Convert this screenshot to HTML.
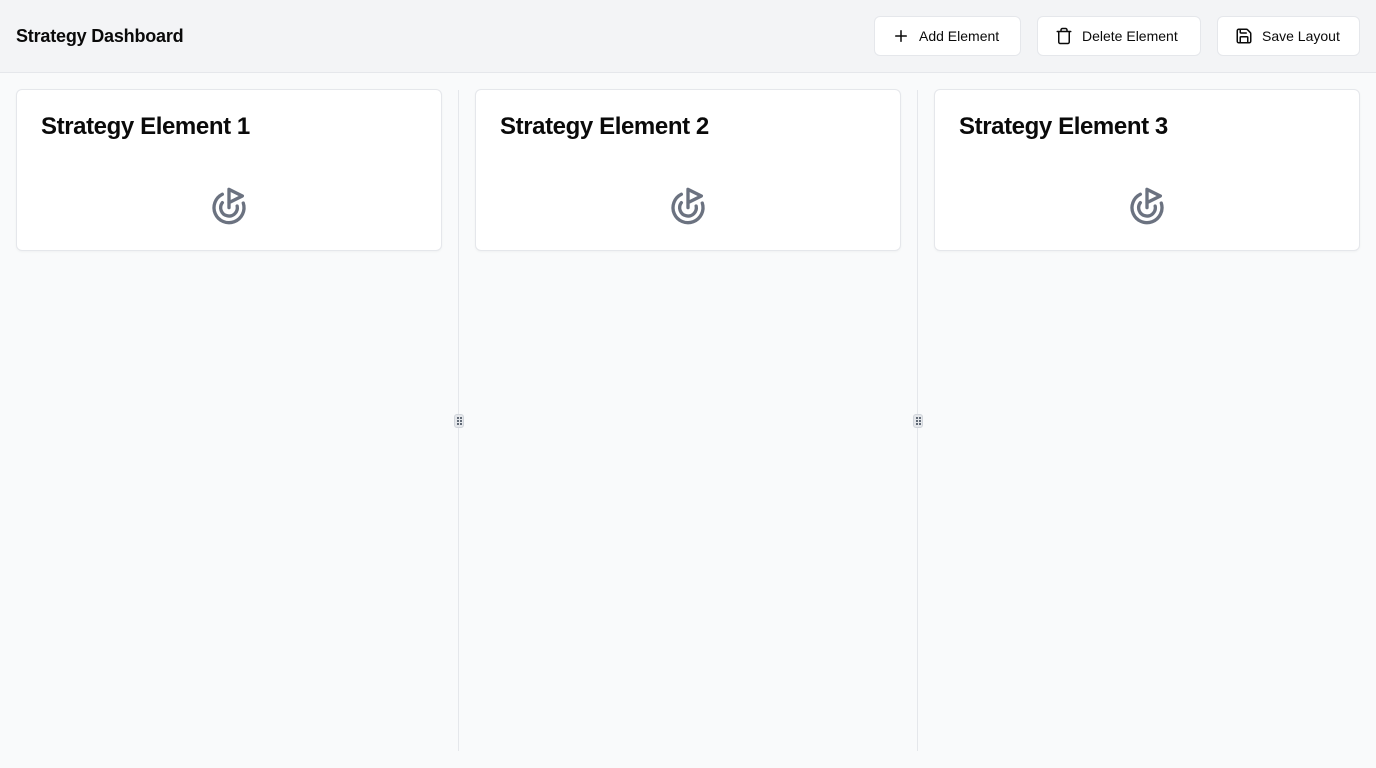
<!DOCTYPE html>
<html><head><style>
*{box-sizing:border-box;margin:0;padding:0}
body{width:1376px;height:768px;background:#f9fafb;font-family:"Liberation Sans",sans-serif;position:relative;overflow:hidden;color:#0a0a0a}
.hdr{position:absolute;left:0;top:0;width:1376px;height:73px;background:#f3f4f6;border-bottom:1px solid #e5e7eb}
.hdr h1{position:absolute;left:16px;top:26px;font-size:18px;font-weight:700;letter-spacing:-0.2px}
.btn{position:absolute;top:16px;height:40px;background:#fff;border:1px solid #e5e7eb;border-radius:6px;font-size:14px;display:flex;align-items:center;padding-left:17px;gap:9px;color:#0a0a0a}
.btn svg{width:18px;height:18px}
.card{position:absolute;top:89px;width:426px;height:162px;background:#fff;border:1px solid #e5e7eb;border-radius:6px;box-shadow:0 1px 2px rgba(0,0,0,.04)}
.card h2{position:absolute;left:24px;top:23px;font-size:24px;font-weight:700;letter-spacing:-0.4px}
.card svg{position:absolute;left:192px;top:96px;width:40px;height:40px}
.div{position:absolute;top:90px;width:1px;height:661px;background:#e5e7eb}
.hd{position:absolute;top:414px;width:10px;height:14px;background:#e5e7eb;border-radius:3px;border:1px solid #d1d5db}
.hd span{position:absolute;width:2px;height:2px;background:#374151;border-radius:1px}
</style></head><body>
<div class="hdr"><h1>Strategy Dashboard</h1>
<div class="btn" style="left:874px;width:147px"><svg viewBox="0 0 24 24" fill="none" stroke="#0a0a0a" stroke-width="2" stroke-linecap="round"><path d="M5 12h14M12 5v14"/></svg>Add Element</div>
<div class="btn" style="left:1037px;width:164px"><svg viewBox="0 0 24 24" fill="none" stroke="#0a0a0a" stroke-width="2" stroke-linecap="round" stroke-linejoin="round"><path d="M3 6h18M19 6v14a2 2 0 0 1-2 2H7a2 2 0 0 1-2-2V6M8 6V4a2 2 0 0 1 2-2h4a2 2 0 0 1 2 2v2"/></svg>Delete Element</div>
<div class="btn" style="left:1217px;width:143px"><svg viewBox="0 0 24 24" fill="none" stroke="#0a0a0a" stroke-width="2" stroke-linecap="round" stroke-linejoin="round"><path d="M15.2 3a2 2 0 0 1 1.4.6l3.8 3.8a2 2 0 0 1 .6 1.4V19a2 2 0 0 1-2 2H5a2 2 0 0 1-2-2V5a2 2 0 0 1 2-2z"/><path d="M17 21v-7a1 1 0 0 0-1-1H8a1 1 0 0 0-1 1v7"/><path d="M7 3v4a1 1 0 0 0 1 1h7"/></svg>Save Layout</div>
</div>
<div class="card" style="left:16px"><h2>Strategy Element 1</h2><svg viewBox="0 0 24 24" fill="none" stroke="#6b7280" stroke-width="2" stroke-linecap="round" stroke-linejoin="round"><path d="M12 13V2l8 4-8 4"/><path d="M20.561 10.222a9 9 0 1 1-12.55-5.29"/><path d="M8.002 9.997a5 5 0 1 0 8.9 2.02"/></svg></div>
<div class="card" style="left:475px"><h2>Strategy Element 2</h2><svg viewBox="0 0 24 24" fill="none" stroke="#6b7280" stroke-width="2" stroke-linecap="round" stroke-linejoin="round"><path d="M12 13V2l8 4-8 4"/><path d="M20.561 10.222a9 9 0 1 1-12.55-5.29"/><path d="M8.002 9.997a5 5 0 1 0 8.9 2.02"/></svg></div>
<div class="card" style="left:934px"><h2>Strategy Element 3</h2><svg viewBox="0 0 24 24" fill="none" stroke="#6b7280" stroke-width="2" stroke-linecap="round" stroke-linejoin="round"><path d="M12 13V2l8 4-8 4"/><path d="M20.561 10.222a9 9 0 1 1-12.55-5.29"/><path d="M8.002 9.997a5 5 0 1 0 8.9 2.02"/></svg></div>
<div class="div" style="left:458px"></div>
<div class="div" style="left:917px"></div>
<div class="hd" style="left:454px"><span style="left:2px;top:2px"></span><span style="left:5px;top:2px"></span><span style="left:2px;top:5px"></span><span style="left:5px;top:5px"></span><span style="left:2px;top:8px"></span><span style="left:5px;top:8px"></span></div>
<div class="hd" style="left:913px"><span style="left:2px;top:2px"></span><span style="left:5px;top:2px"></span><span style="left:2px;top:5px"></span><span style="left:5px;top:5px"></span><span style="left:2px;top:8px"></span><span style="left:5px;top:8px"></span></div>
</body></html>
